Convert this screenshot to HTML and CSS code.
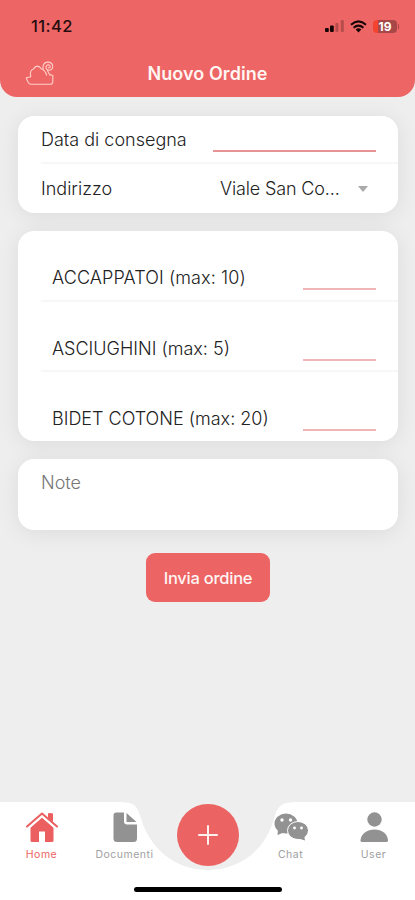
FILE: index.html
```html
<!DOCTYPE html>
<html lang="it">
<head>
<meta charset="utf-8">
<meta name="viewport" content="width=device-width, initial-scale=1">
<title>Nuovo Ordine</title>
<link rel="stylesheet" href="styles.css">
</head>
<body>
<div class="app">
  <header class="header">
    <div class="status">
      <span class="time">11:42</span>
      <div class="indicators">
        <svg class="signal" width="20" height="12" viewBox="0 0 20 12"><rect x="0" y="8" width="3.8" height="4" rx="1"/><rect x="5" y="5.5" width="3.8" height="6.5" rx="1"/><g opacity=".25"><rect x="10.4" y="3" width="3" height="9" rx="1"/><rect x="15.8" y="0" width="3" height="12" rx="1"/></g></svg>
        <svg class="wifi" width="17" height="13" viewBox="0 0 17 13"><g fill="none" stroke="#160506" stroke-width="2.1"><path d="M1 4.7Q8.5-2.1 16 4.7"/><path d="M3.6 7.7Q8.5 3.4 13.4 7.7"/></g><path d="M5.7 9.4Q8.5 7.2 11.3 9.4L8.5 12.4Z"/></svg>
        <div class="battery"><span>19</span></div>
      </div>
    </div>
    <div class="titlebar">
      <svg class="logo" width="30" height="26" viewBox="0 0 30 26"><path d="M21.8 14.5C20.5 10.5 19.5 8.5 16.5 8C14 4.2 10.5 4.2 8.5 8C5.5 8.4 4.8 11.8 5.8 15.7L1.3 16.8C2.2 20 3.3 23.2 6.2 23.3H25.3Q27.7 23.3 27.8 20.7V14.5L24.8 13.5M18.3 9.5Q16.7 1.7 22.3 1.1Q27.3.8 27.7 5.2Q27.7 8.8 24.3 9.2Q20.8 9 21 6Q21.4 3.7 23.4 3.7Q25.7 4.2 25 6.5L22.9 7M22.2 9.2L25.2 14.4"/></svg>
      <h1>Nuovo Ordine</h1>
    </div>
  </header>

  <main>
    <section class="card details">
      <label class="row date"><span class="label-date">Data di consegna</span><span class="field field-date"></span></label>
      <div class="row address"><span class="label-address">Indirizzo</span><span class="select"><span>Viale San Co...</span><i class="caret"></i></span></div>
    </section>
    <section class="card items">
      <label class="row item"><span class="item-a">ACCAPPATOI (max: 10)</span><span class="field"></span></label>
      <label class="row item"><span class="item-b">ASCIUGHINI (max: 5)</span><span class="field"></span></label>
      <label class="row item"><span class="item-c">BIDET COTONE (max: 20)</span><span class="field"></span></label>
    </section>
    <section class="card note">Note</section>
    <button class="submit">Invia ordine</button>
  </main>

  <nav class="tabs">
    <svg class="tabs-bg" width="415" height="99" viewBox="0 0 415 99"><path fill="#fff" d="M0 1H121C132 1 137 4 140 14C149 48 175 69 208 69C241 69 267 48 275 14C278 4 284 1 295 1H415V99H0Z"/></svg>
    <a class="tab active">
      <svg width="34" height="32" viewBox="0 0 34 32"><path fill="currentColor" d="M5.5 16.5L17 6.5L28.5 16.5V29.5Q28.5 31 27 31H20V20.5H14V31H7Q5.500 31 5.500 29.500ZM23 2.500H27.500V10L23 6Z"/><path fill="none" stroke="#fff" stroke-width="3.600" d="M3.500 15.800L17 4.100L30.500 15.800"/><path fill="none" stroke="currentColor" stroke-width="2" stroke-linecap="round" stroke-linejoin="round" d="M2 15.500L17 2.500L32 15.500M25.200 3V8"/><path fill="currentColor" d="M23 2.500H28V11L23 6.500Z"/></svg>
      <span>Home</span>
    </a>
    <a class="tab docs">
      <svg width="34" height="32" viewBox="0 0 34 32"><path fill="currentColor" d="M8.500 1.500H16V10.500Q16 13.500 19 13.500H29V27.500Q29 31 25.500 31H9Q5.500 31 5.500 27.500V4.500Q5.500 1.500 8.500 1.500ZM18.500 2L28.500 11H18.500Z"/></svg>
      <span>Documenti</span>
    </a>
    <button class="add" aria-label="+"><svg width="20" height="20" viewBox="0 0 20 20"><path d="M10 1V19M1 10H19"/></svg></button>
    <a class="tab">
      <svg width="34" height="32" viewBox="0 0 34 32"><g fill="currentColor"><ellipse cx="12" cy="12.500" rx="11.500" ry="10"/><path d="M4 18L3.500 24L11 21Z"/><g stroke="#fff" stroke-width="1"><ellipse cx="24" cy="19.500" rx="10.500" ry="9"/></g><path d="M23 27L31 29.500L30 24Z"/></g><g fill="#fff"><circle cx="8" cy="9" r="1.700"/><circle cx="16.500" cy="9" r="1.700"/><circle cx="20.500" cy="17" r="1.400"/><circle cx="27.500" cy="17" r="1.400"/></g></svg>
      <span>Chat</span>
    </a>
    <a class="tab">
      <svg width="34" height="32" viewBox="0 0 34 32"><path fill="currentColor" d="M3.500 29.500C4 22.500 10 18.500 17.500 18.500S30.500 22.500 31 29.500Q31 31 29.500 31H5Q3.500 31 3.500 29.500Z"/><circle fill="currentColor" cx="17.500" cy="8.500" r="7.200"/></svg>
      <span>User</span>
    </a>
    <div class="home-indicator"></div>
  </nav>
</div>
</body>
</html>
```
FILE: styles.css
```css
* { box-sizing: border-box; }
body { margin: 0; background: #eee; font-family: Inter, "Liberation Sans", sans-serif; color: #222; }
.app { width: 415px; height: 900px; display: flex; flex-direction: column; overflow: hidden; background: #eee; }
.header { height: 97px; flex: none; background: #ed6564; border-radius: 0 0 17px 17px; }
.status { height: 52px; padding: 0 18px 0 31px; display: flex; align-items: center; justify-content: space-between; color: #260d0e; }
.time { font-size: 16.5px; font-weight: 500; letter-spacing: .4px; }
.indicators { display: flex; align-items: center; gap: 5px; }
.signal, .wifi { fill: #160506; }
.wifi { margin-right: 1px; }
.battery { position: relative; width: 24px; height: 13px; border-radius: 4px; background: linear-gradient(90deg, #f4432f 0 5px, #a84747 5px); color: #fff; font-size: 12px; line-height: 13px; font-weight: 700; text-align: center; }
.battery::after { content: ""; position: absolute; right: -2px; top: 4px; width: 1px; height: 5px; background: #a84747; border-radius: 1px; }
.titlebar { display: grid; grid-template-columns: 60px 1fr 60px; height: 43px; align-items: center; }
.logo { margin: 1px 0 0 25px; fill: none; stroke: #ffd0c9; stroke-width: 1.1; stroke-linejoin: round; }
h1 { margin: 0; font-size: 18px; line-height: 22px; font-weight: 600; text-align: center; color: #fff5f2; letter-spacing: .07px; }
main { flex: 1; padding: 18.500px 17px 0 18px; display: flex; flex-direction: column; }
.card { background: #fff; border-radius: 16px; box-shadow: 0 3px 22px rgba(0,0,0,.08); flex: none; font-size: 18px; line-height: 22px; font-weight: 300; white-space: nowrap; }
.details { height: 97.500px; margin-bottom: 18px; padding-left: 23px; }
.row { display: flex; justify-content: space-between; padding-right: 22px; }
.date { height: 48.500px; padding-top: 13px; border-bottom: 2px solid #f7f7f7; }
.address { padding-top: 14px; }
.field { width: 73px; height: 2px; background: #f0b5b7; }
.field-date { width: 163px; margin-top: 21px; background: #e69396; }
.select { width: 156px; display: flex; align-items: center; justify-content: space-between; letter-spacing: -.15px; }
.caret { width: 10px; height: 6px; margin-right: 8px; background: #aaa; clip-path: polygon(0 0, 100% 0, 50% 100%); }
.items { height: 210px; margin-bottom: 18px; padding-left: 23px; }
.item { height: 70.500px; padding: 36px 22px 0 11px; border-bottom: 2px solid #f7f7f7; }
.item:last-child { border-bottom: 0; }
.item .field { margin-top: 21px; }
.item-a { letter-spacing: .1px; }
.note { height: 71px; padding: 13px 23px; color: #777; }
.submit { align-self: center; width: 124px; height: 49px; margin: 23px 0 0; padding: 0; border: 0; border-radius: 9px; background: #ec6463; color: #fff5f4; font: 500 16.5px/20px Inter, "Liberation Sans", sans-serif; letter-spacing: -.25px; }
.tabs { position: relative; height: 99px; flex: none; display: grid; grid-template-columns: repeat(5, 83px); align-items: start; }
.tabs-bg { position: absolute; inset: 0; }
.tab { position: relative; padding-top: 10px; display: flex; flex-direction: column; align-items: center; color: #929292; }
.tab svg { display: block; }
.tab span { margin-top: 5px; font: 400 10.500px/13px Inter, "Liberation Sans", sans-serif; letter-spacing: .5px; color: #a0a0a0; }
.tab.active, .tab.active span { color: #ec5f60; }
.add { position: relative; justify-self: center; width: 62px; height: 62px; margin: 3px 0 0 1px; padding: 0; border: 0; border-radius: 50%; display: grid; place-items: center; background: #eb6463; }
.add svg { fill: none; stroke: #fff0ed; stroke-width: 2; stroke-linecap: round; }
.home-indicator { position: absolute; left: 134px; bottom: 8px; width: 148px; height: 5px; border-radius: 3px; background: #000; }
```
